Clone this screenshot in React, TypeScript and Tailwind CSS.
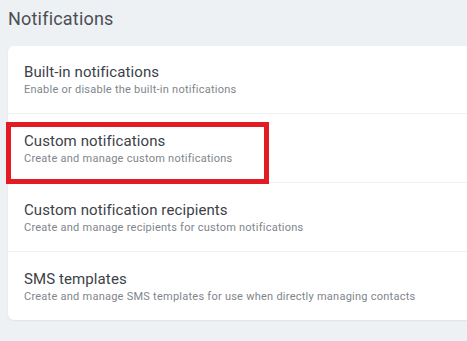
const rows = [
    { title: 'Built-in notifications', text: 'Enable or disable the built-in notifications' },
    { title: 'Custom notifications', text: 'Create and manage custom notifications', marked: true },
    { title: 'Custom notification recipients', text: 'Create and manage recipients for custom notifications' },
    { title: 'SMS templates', text: 'Create and manage SMS templates for use when directly managing contacts' },
];

export default function App() {
    return (
        <div className="h-[341px] w-full overflow-hidden bg-[#eef1f4] pl-2 pt-[7px]" style={{ fontFamily: 'Roboto, "Liberation Sans", sans-serif' }}>
            <h1 className="text-[18px] leading-6 tracking-[0.2px] text-[#4b4f54]">Notifications</h1>

            <div className="mt-[15px] mr-[-12px] rounded-md bg-white shadow-[0_1px_2px_rgba(0,0,0,0.06)]">
                {rows.map((row, i) => (
                    <div
                        key={row.title}
                        className={`relative px-4 ${i === 0 ? 'pt-4' : 'pt-[17px]'} pb-[15px] ${i < rows.length - 1 ? 'border-b border-[#eef0f2]' : ''}`}
                    >
                        <div className="text-[15px] leading-5 tracking-[0.1px] text-[#3c4147]">{row.title}</div>
                        <div className="text-[11px] leading-4 tracking-[0.25px] text-[#80858b]">{row.text}</div>

                        {/* annotation box */}
                        {row.marked && (
                            <div className="absolute left-[-2px] top-2 h-[62px] w-[263px] border-[5px] border-[#e31b23]" />
                        )}
                    </div>
                ))}
            </div>
        </div>
    );
}
